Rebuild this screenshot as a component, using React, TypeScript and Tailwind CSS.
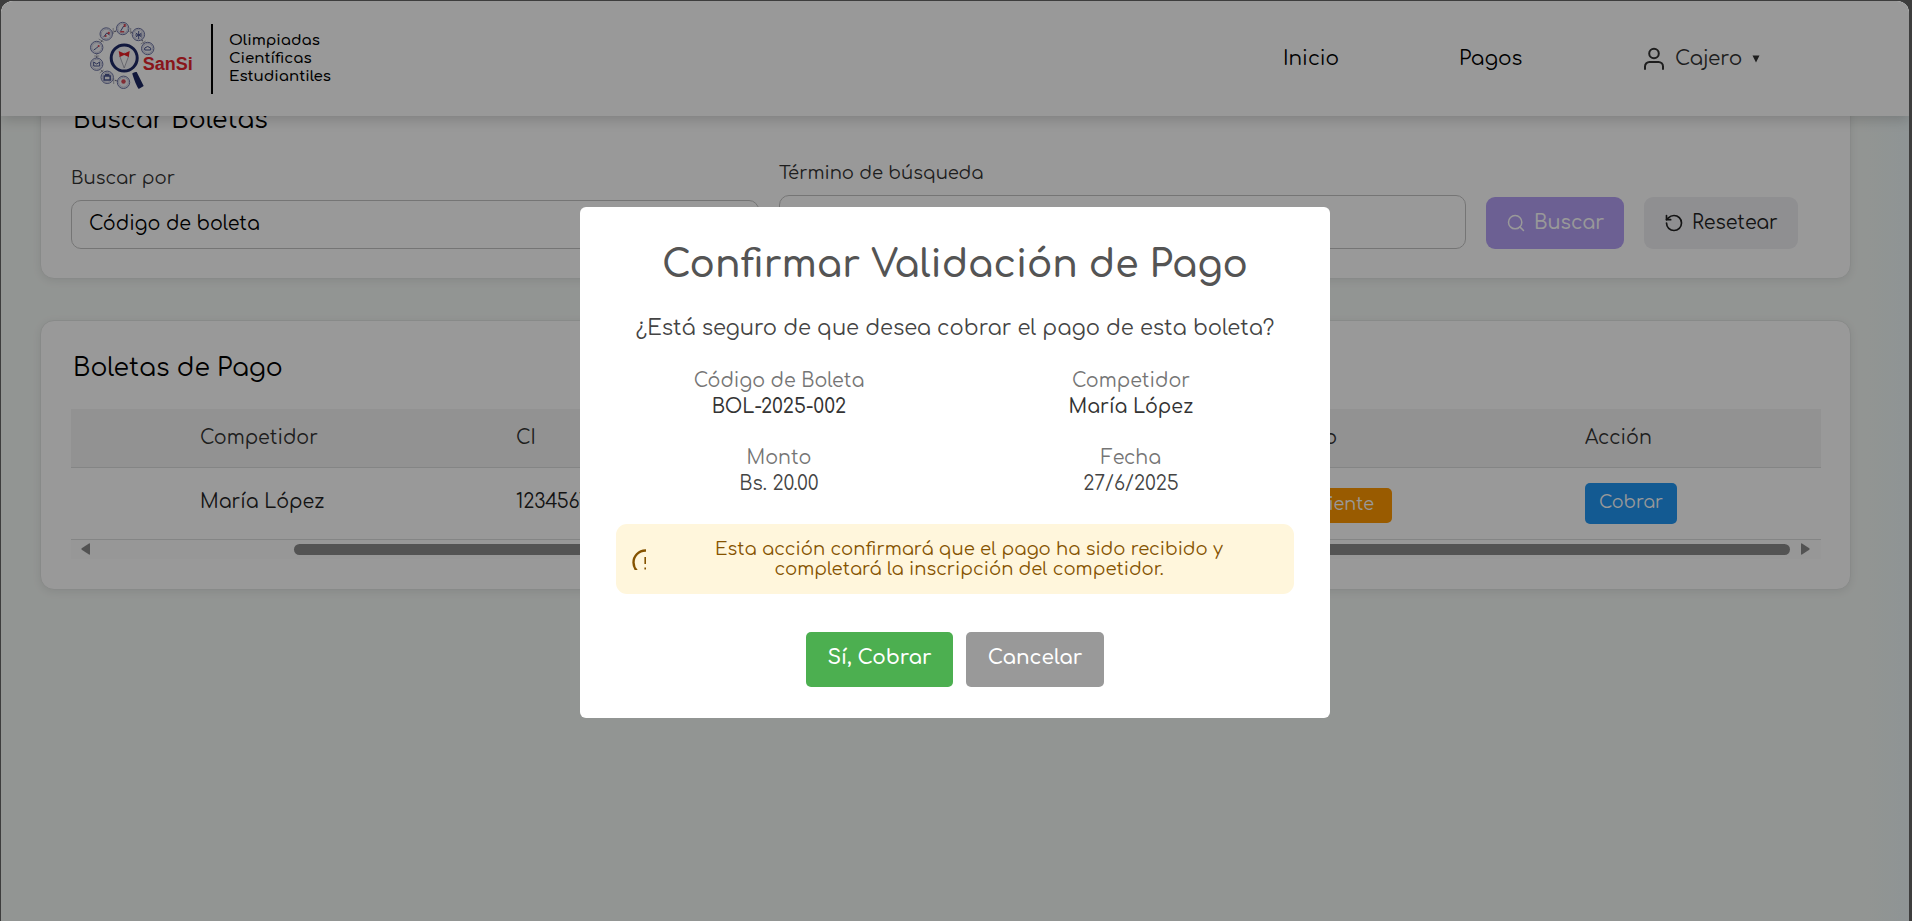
import { RotateCcw, Search } from "lucide-react";

const BADGES = [
  [22, 32.5], [31.500, 19], [48, 13.500], [63.700, 19.500], [73, 33.500], [22, 49.200], [32.500, 62.300], [48.800, 67.300],
];

function Logo() {
  return (
    <svg width="108" height="72" viewBox="13.3 6 108 72" className="shrink-0">
      <path d="M22 50V33L32 19L48 14L64 20L73 34M22 50L33 63L49 68" fill="none" stroke="#77778a" strokeWidth="1.2" strokeDasharray="2 1.5" />
      <path d="M19.500 41h5M38.500 13v6M56 13v6M24 24l5 3M39 63v6M25 58l4-3M66 29l5-3" fill="none" stroke="#9a9aa8" strokeWidth=".8" />
      {BADGES.map(([x, y]) => (
        <g key={`${x}-${y}`}>
          <circle cx={x} cy={y} r="6.2" fill="#f4f4f8" stroke="#6d74a4" strokeWidth="1" />
          <circle cx={x} cy={y} r="4.9" fill="none" stroke="#a4a8c8" strokeWidth=".6" />
        </g>
      ))}
      <g fill="none" stroke="#4b5590" strokeWidth="1">
        <path d="M19 35l3-2 2-2M29 22l3-4 3 2M46 16l3-5M61 18l6 4M61 22l6-4M64 16v8M60.500 20h7M70 35v-2q3-3 6 0v2zM19 47v4h6v-4l-3 2z" />
        <path d="M29.500 61h6v4h-6zM31 61v-1.500h3v1.500" strokeWidth="1.500" />
      </g>
      <g fill="#d84a58">
        <circle cx="24" cy="31" r="1" />
        <circle cx="34" cy="18" r="1.200" />
        <circle cx="31" cy="21" r="1" />
        <path d="M45.500 16h4v1.500h-4zM49 9h2v3h-2z" />
        <circle cx="48.800" cy="66.500" r="2.200" />
      </g>
      <path d="M57.500 58.500q2-2 4.500-1.500l7 14-5 3q-3-4-6.500-15.500z" fill="#1c2763" />
      <circle cx="49.500" cy="43" r="13" fill="#f5f5f8" stroke="#1f2a68" strokeWidth="3" />
      <path d="M45 41l4.500 12 4.500-12-4.500-3z" fill="#fff" stroke="#8c8c9c" strokeWidth=".7" />
      <path d="M44 36l5.500 2.500L55 36l-1 6-4.500-2-4.500 2z" fill="#ec2027" />
      <text x="68" y="55" fontFamily="Liberation Sans" fontWeight="700" fontSize="18" fill="#e5262e" textLength="50" lengthAdjust="spacingAndGlyphs">SanSi</text>
    </svg>
  );
}

function Header() {
  return (
    <header className="relative z-10 flex h-[115px] shrink-0 items-start bg-white shadow-[0_4px_12px_rgba(0,0,0,0.16)]">
      <div className="flex pl-[87px] pt-[20px]">
        <Logo />
      </div>
      <div className="ml-[15px] mt-[23px] flex h-[70px] w-[213px] items-center border-l-2 border-black pl-[16px] text-[15px] font-semibold leading-[18px] text-black">
        <div className="pb-[1px]">Olimpiadas<br />Científicas<br />Estudiantiles</div>
      </div>
      <nav className="ml-auto flex h-[115px] items-center pr-[149px] text-[20px] text-black">
        <span className="w-[176px]">Inicio</span>
        <span className="w-[184px]">Pagos</span>
        <span className="flex items-center text-[#333333]">
          <svg width="22" height="24" viewBox="0 0 22 24" fill="none" stroke="currentColor" strokeWidth="2" strokeLinecap="round" className="mr-[10px]">
            <circle cx="11" cy="6.500" r="4.800" />
            <path d="M2 22v-2.500a4.500 4.500 0 0 1 4.500-4.500h9a4.500 4.500 0 0 1 4.500 4.500V22" />
          </svg>
          <span className="w-[77px]">Cajero</span>
          <svg width="8" height="8" viewBox="0 0 8 8"><path d="M.5 0.500h7L4 7.500z" fill="currentColor" /></svg>
        </span>
      </nav>
    </header>
  );
}

function SearchCard() {
  return (
    <section className="-mt-[20px] h-[183px] rounded-[14px] border border-[#e3e6e4] bg-white pl-[30px] shadow-[0_2px_8px_rgba(0,0,0,0.08)]">
      <h2 className="pl-[2px] pt-[7px] text-[25px] leading-[32px] text-black">Buscar Boletas</h2>
      <div className="mt-[25px] flex items-end">
        <div className="w-[688px]">
          <div className="mb-[10px] text-[18px] leading-[24px] text-[#333333]">Buscar por</div>
          <div className="flex h-[49px] items-center rounded-[10px] border border-[#c4c4c4] pl-[17px] text-[19px] text-black">Código de boleta</div>
        </div>
        <div className="ml-[20px] w-[687px]">
          <div className="mb-[10px] text-[18px] leading-[24px] text-[#333333]">Término de búsqueda</div>
          <div className="h-[54px] rounded-[10px] border border-[#c4c4c4]" />
        </div>
        <button className="ml-[20px] flex h-[52px] w-[138px] items-center rounded-[9px] bg-[#b4a1f5] pl-[20px] text-[19.2px] font-medium text-white">
          <Search size={20} strokeWidth={1.8} className="mr-[8px]" />Buscar
        </button>
        <button className="ml-[20px] flex h-[52px] w-[154px] items-center rounded-[9px] bg-[#efeff2] pl-[20px] text-[19px] text-[#222222]">
          <RotateCcw size={20} strokeWidth={2} className="mr-[8px]" />Resetear
        </button>
      </div>
    </section>
  );
}

function TableCard() {
  return (
    <section className="mt-[41px] h-[270px] rounded-[14px] border border-[#e3e6e4] bg-white pl-[30px] pr-[29px] shadow-[0_2px_8px_rgba(0,0,0,0.08)]">
      <h2 className="pl-[2px] pt-[31px] text-[25px] leading-[32px] text-black">Boletas de Pago</h2>
      <div className="mt-[25px] text-[19px]">
        <div className="flex h-[59px] items-center border-b border-[#dcdede] bg-[#f3f3f3] pl-[129px] text-[#333333]">
          <span className="w-[316px]">Competidor</span>
          <span className="w-[751px]">CI</span>
          <span className="w-[318px]">Estado</span>
          <span>Acción</span>
        </div>
        <div className="flex h-[72px] items-center border-b border-[#dcdede] pl-[129px] text-[#222222]">
          <span className="w-[316px] pb-[2px]">María López</span>
          <span className="w-[737px] pb-[2px]">12345678</span>
          <span className="w-[332px]">
            <span className="mt-[3px] flex h-[35px] w-[139px] items-center justify-end rounded-[5px] bg-[#ff9800] pr-[18px] text-[17.5px] text-white">Pendiente</span>
          </span>
          <button className="flex h-[41px] w-[92px] items-center justify-center rounded-[5px] bg-[#2196f3] text-[17.5px] text-white">Cobrar</button>
        </div>
        <div className="flex h-[19px] items-center bg-[#fcfcfc] px-[10px] pb-[1px]">
          <svg width="9" height="12" viewBox="0 0 9 12"><path d="M9 1v10q0 1-1 .6L.7 6.700q-.7-.7 0-1.400L8 .4q1-.4 1 .6z" fill="#8b8b8b" /></svg>
          <div className="ml-[204px] h-[11px] w-[1496px] rounded-full bg-[#8b8b8b]" />
          <svg width="9" height="12" viewBox="0 0 9 12" className="ml-[11px]"><path d="M0 1v10q0 1 1 .6L8.300 6.700q.7-.7 0-1.400L1 .4Q0 0 0 1z" fill="#8b8b8b" /></svg>
        </div>
      </div>
    </section>
  );
}

function Detail({ label, value, strong }: { label: string; value: string; strong?: boolean }) {
  return (
    <div className="flex flex-col items-center text-[19px] leading-[26px]">
      <span className="text-[#757575]">{label}</span>
      <span className={strong ? "font-medium text-[#333333]" : "text-[#444444]"}>{value}</span>
    </div>
  );
}

function ConfirmDialog() {
  return (
    <div role="dialog" className="mt-[206px] flex h-[511px] w-[750px] flex-col items-center rounded-[6px] bg-white">
      <h1 className="mt-[32px] text-[37.5px] font-semibold leading-[52px] text-[#545454]">Confirmar Validación de Pago</h1>
      <p className="mt-[23px] text-[21px] leading-[28px] text-[#444444]">¿Está seguro de que desea cobrar el pago de esta boleta?</p>
      <div className="mt-[26px] grid w-[704px] grid-cols-2 gap-y-[25px]">
        <Detail label="Código de Boleta" value="BOL-2025-002" strong />
        <Detail label="Competidor" value="María López" strong />
        <Detail label="Monto" value="Bs. 20.00" />
        <Detail label="Fecha" value="27/6/2025" />
      </div>
      <div className="mt-[27px] flex h-[70px] w-[678px] items-center rounded-[11px] bg-[#fff6dc] pl-[16px] text-[#855300]">
        <svg width="14" height="21" viewBox="0 0 14 21" fill="none" stroke="currentColor" className="shrink-0">
          <circle cx="13.500" cy="13.500" r="12" strokeWidth="2.400" />
          <path d="M13.200 8v7M13.200 18.500v2" strokeWidth="1.600" />
        </svg>
        <p className="ml-[47px] w-[552px] text-center text-[18px] leading-[20px]">
          Esta acción confirmará que el pago ha sido recibido y<br />completará la inscripción del competidor.
        </p>
      </div>
      <div className="mt-[38px] flex gap-[13px] text-[20px] font-semibold text-white">
        <button className="h-[55px] w-[147px] rounded-[5px] bg-[#4caf50] pb-[3px]">Sí, Cobrar</button>
        <button className="h-[55px] w-[138px] rounded-[5px] bg-[#999999] pb-[3px]">Cancelar</button>
      </div>
    </div>
  );
}

export default function App() {
  return (
    <div className="h-screen w-full overflow-hidden bg-[#3d3d3d] pl-px pr-[3px] pt-px font-['Comfortaa','Lato',sans-serif]">
      <div className="relative flex h-full flex-col overflow-hidden rounded-t-[12px] bg-[linear-gradient(90deg,#f4f8f5_0%,#f4f8f5_97.500%,#eef7f8_100%)]">
        <Header />
        <main className="pl-[39px] pr-[58px]">
          <SearchCard />
          <TableCard />
        </main>
        <div className="absolute inset-0 z-20 flex justify-center bg-black/40">
          <ConfirmDialog />
        </div>
      </div>
    </div>
  );
}
